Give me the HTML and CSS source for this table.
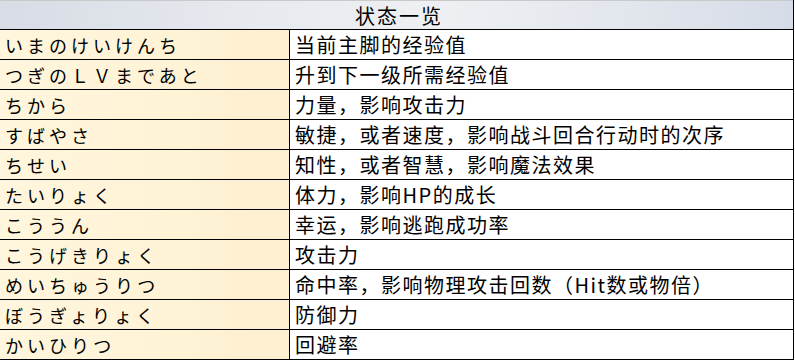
FILE: index.html
```html
<!DOCTYPE html>
<html>
<head>
<meta charset="utf-8">
<link rel="stylesheet" href="styles.css">
</head>
<body>
<div class="table">
  <div class="head">状态一览</div>
  <div class="row"><div class="key">いまのけいけんち</div><div class="val">当前主脚的经验值</div></div>
  <div class="row"><div class="key">つぎのＬＶまであと</div><div class="val">升到下一级所需经验值</div></div>
  <div class="row"><div class="key">ちから</div><div class="val">力量，影响攻击力</div></div>
  <div class="row"><div class="key">すばやさ</div><div class="val">敏捷，或者速度，影响战斗回合行动时的次序</div></div>
  <div class="row"><div class="key">ちせい</div><div class="val">知性，或者智慧，影响魔法效果</div></div>
  <div class="row"><div class="key">たいりょく</div><div class="val">体力，影响HP的成长</div></div>
  <div class="row"><div class="key">こううん</div><div class="val">幸运，影响逃跑成功率</div></div>
  <div class="row"><div class="key">こうげきりょく</div><div class="val">攻击力</div></div>
  <div class="row"><div class="key">めいちゅうりつ</div><div class="val">命中率，影响物理攻击回数（Hit数或物倍）</div></div>
  <div class="row"><div class="key">ぼうぎょりょく</div><div class="val">防御力</div></div>
  <div class="row"><div class="key">かいひりつ</div><div class="val">回避率</div></div>
</div>
</body>
</html>
```

FILE: styles.css
```css
html, body {
  margin: 0;
  padding: 0;
  background: #fff;
}
.table {
  width: 793px;
  border-right: 1px solid #000;
  color: #000;
}
.head {
  border-top: 1px solid #c9c9c9;
  border-bottom: 1px solid #000;
  box-sizing: border-box;
  height: 30px;
  background: linear-gradient(to right, #d7dce5 0%, #e6e9ee 30%, #eef0f3 55%, #e4e8ee 75%, #d6dce7 100%);
  display: flex;
  align-items: center;
  justify-content: center;
  font-family: "Noto Sans CJK SC", sans-serif;
  font-size: 20px;
  letter-spacing: 2px;
  line-height: 1;
  padding-top: 1px;
  padding-left: 5px;
}
.row {
  display: flex;
  height: 30px;
  box-sizing: border-box;
  border-bottom: 1px solid #000;
}
.key {
  width: 290px;
  flex: none;
  box-sizing: border-box;
  border-right: 1px solid #000;
  background: linear-gradient(to right, #fff6dd 0%, #fff3d6 60%, #fdefcf 100%);
  padding-left: 5px;
  display: flex;
  align-items: center;
  font-family: "Noto Sans CJK JP", sans-serif;
  font-size: 18px;
  letter-spacing: 4px;
  line-height: 1;
}
.val {
  flex: 1;
  padding-left: 5px;
  display: flex;
  align-items: center;
  font-family: "Noto Sans CJK SC", sans-serif;
  font-size: 20px;
  letter-spacing: 1.5px;
  line-height: 1;
  white-space: nowrap;
}
```
